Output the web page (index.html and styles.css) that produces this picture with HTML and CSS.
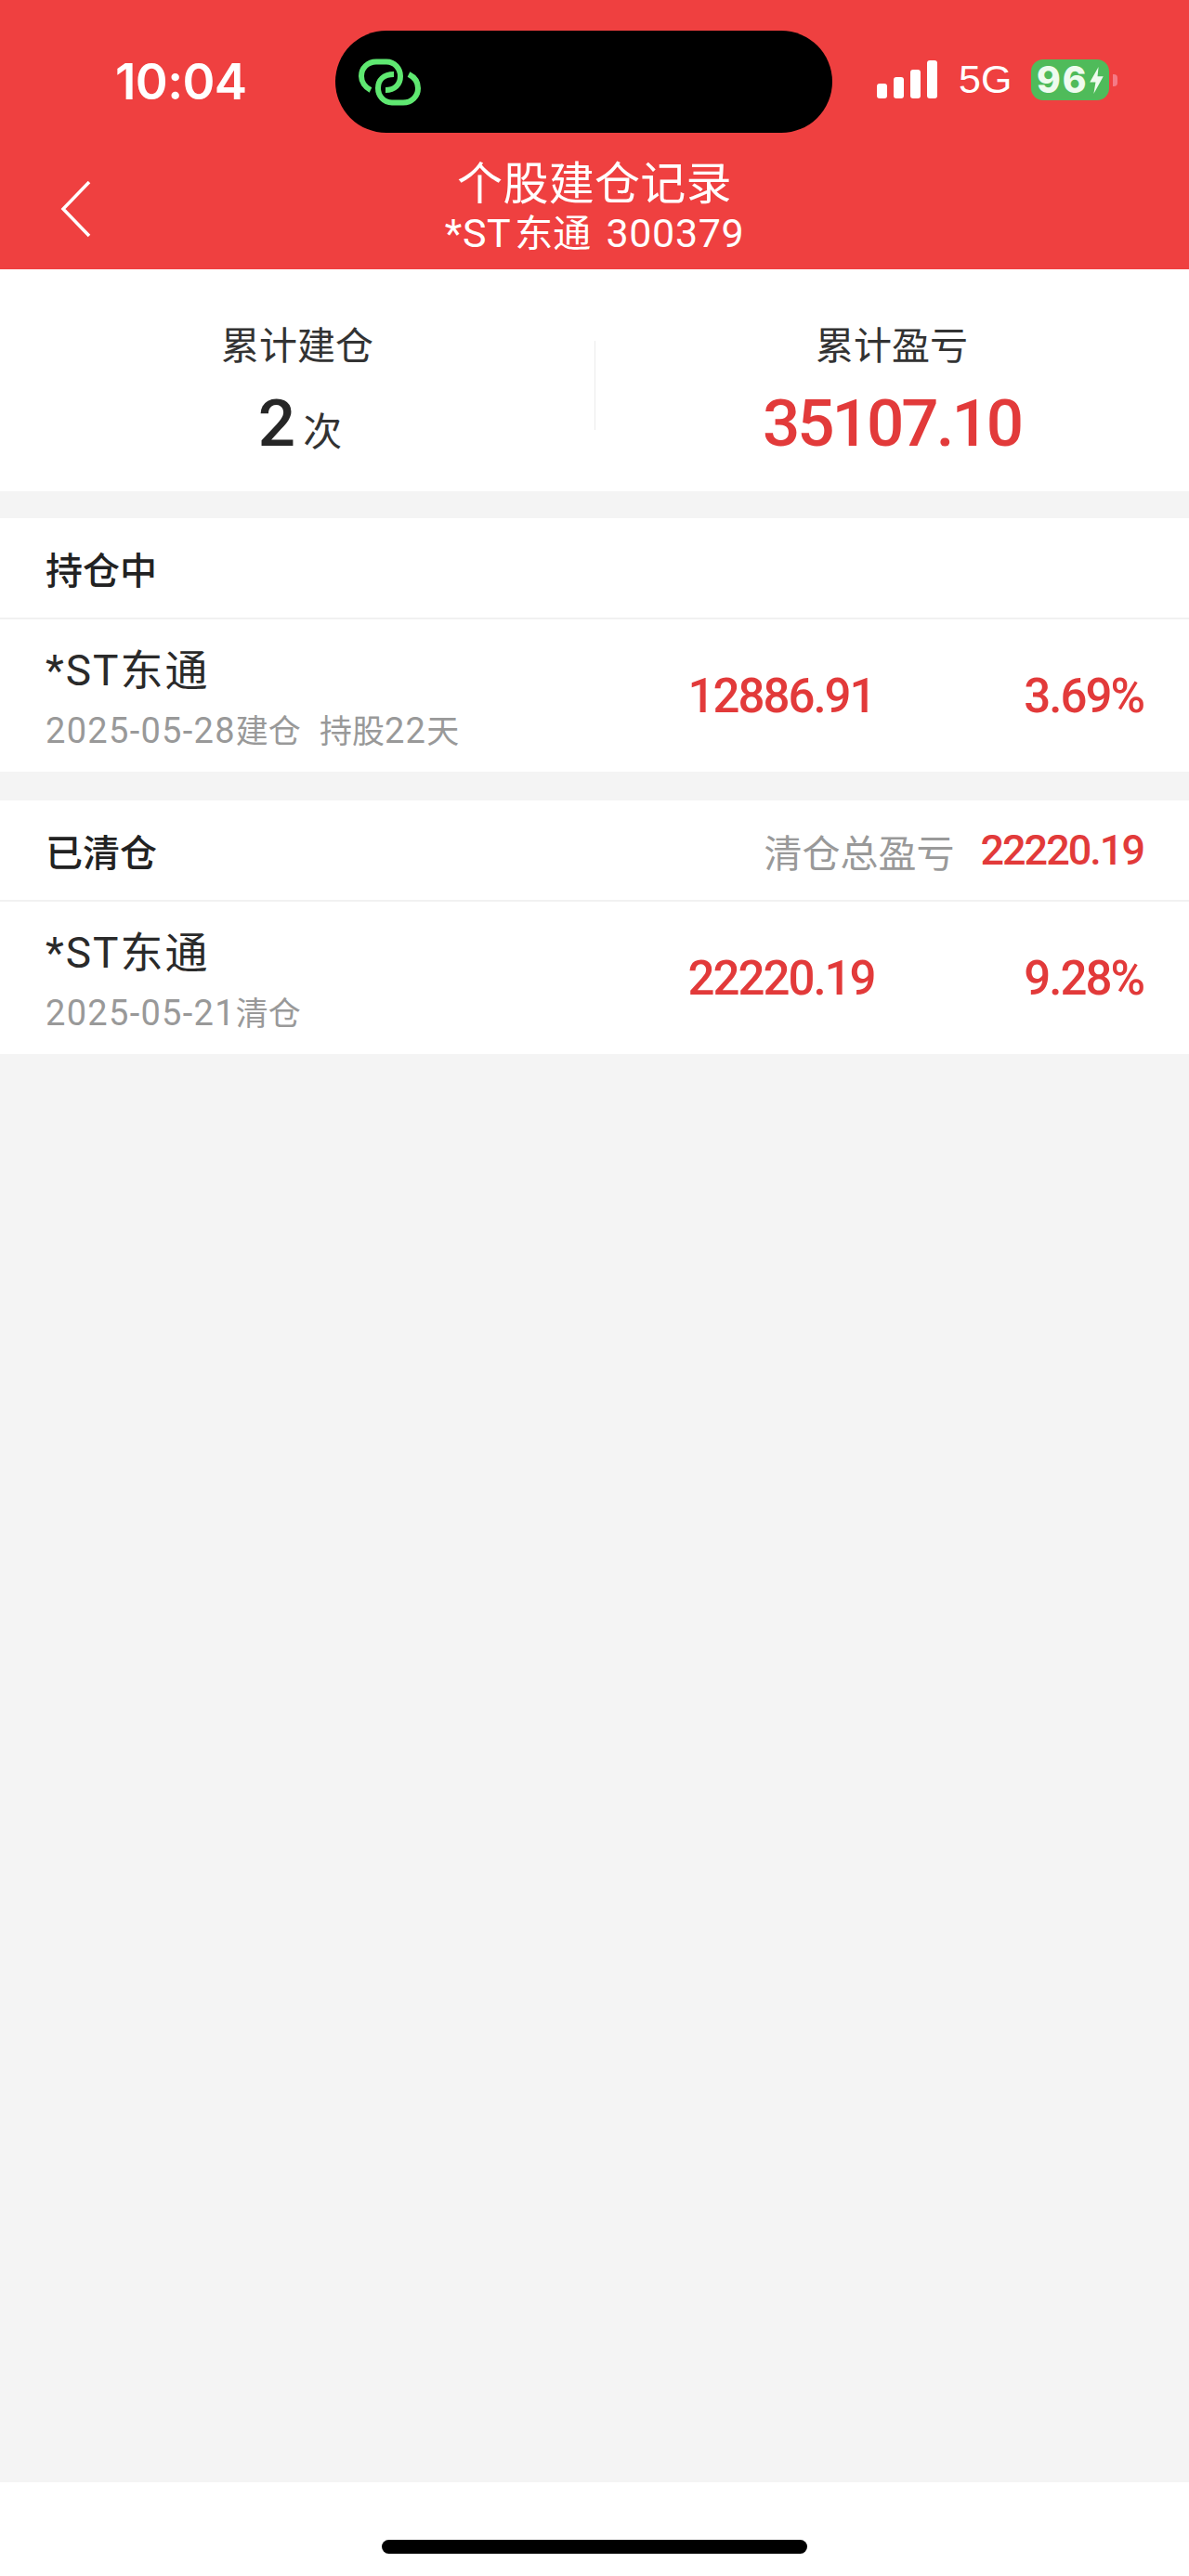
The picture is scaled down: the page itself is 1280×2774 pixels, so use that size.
FILE: index.html
```html
<!DOCTYPE html>
<html lang="zh-CN">
<head>
<meta charset="utf-8">
<title>个股建仓记录</title>
<link rel="stylesheet" href="styles.css">
</head>
<body>
<div class="app">
  <header class="top">
    <div class="status">
      <span class="time">10:04</span>
      <div class="island">
        <svg class="link" viewBox="0 0 67 51" width="67" height="51" fill="none" stroke="#5fe871" stroke-width="6">
          <path d="M13 34C7 31 3 25 3 19C3 10 10 3.500 19 3.500H30C39 3.500 45 11 45 19C45 28 39 34 29 34"/>
          <path d="M54 17C60 20 64 25 64 32C64 41 57 47.500 48 47.500H36C27 47.500 21 40 21 32C21 23 27 17 38 17"/>
        </svg>
      </div>
      <div class="indicators">
        <div class="signal"><i class="b1"></i><i class="b2"></i><i class="b3"></i><i class="b4"></i></div>
        <span class="net">5G</span>
        <div class="battery">
          <div class="cell"><span>96</span>
            <svg viewBox="0 0 14 28" width="17" height="29"><path d="M9 0L0 16H6L4 28L14 10H8Z" fill="#eefbef"/></svg>
          </div>
          <i class="nub"></i>
        </div>
      </div>
    </div>
    <div class="nav">
      <svg class="back" viewBox="0 0 35 62" width="35" height="62" fill="none" stroke="#fff" stroke-width="3.500"><path d="M32 1L4 30L32 59"/></svg>
      <div class="title">
        <div class="t1">个股建仓记录</div>
        <div class="t2">*ST<span class="cn">东通</span> 300379</div>
      </div>
    </div>
  </header>

  <section class="summary">
    <div class="stat">
      <div class="label">累计建仓</div>
      <div class="val dark"><b>2</b><span>次</span></div>
    </div>
    <div class="stat">
      <div class="label">累计盈亏</div>
      <div class="val red"><b>35107.10</b></div>
    </div>
  </section>

  <section class="group">
    <div class="ghead"><strong>持仓中</strong></div>
    <div class="row">
      <div class="who">
        <div class="name">*ST东通</div>
        <div class="meta">2025-05-28<span class="cn">建仓</span><span class="cn gap">持股</span>22<span class="cn">天</span></div>
      </div>
      <div class="amt">12886.91</div>
      <div class="pct">3.69%</div>
    </div>
  </section>

  <section class="group">
    <div class="ghead">
      <strong>已清仓</strong>
      <span class="tlabel">清仓总盈亏</span>
      <span class="tval">22220.19</span>
    </div>
    <div class="row">
      <div class="who">
        <div class="name">*ST东通</div>
        <div class="meta">2025-05-21<span class="cn">清仓</span></div>
      </div>
      <div class="amt">22220.19</div>
      <div class="pct">9.28%</div>
    </div>
  </section>

  <div class="fill"></div>
  <footer class="home"><i></i></footer>
</div>
</body>
</html>
```
FILE: styles.css
```css
* { box-sizing: border-box; }
html, body { margin: 0; padding: 0; }
body {
  width: 1280px;
  height: 2774px;
  background: #f4f4f4;
  font-family: "Roboto", "Noto Sans CJK SC", sans-serif;
  color: #2a2a2a;
}
.app { display: flex; flex-direction: column; height: 2774px; }

.top { height: 290px; background: #ef4040; color: #fff; flex: none; }
.status { display: flex; align-items: flex-start; height: 143px; padding-top: 33px; }
.time {
  width: 237px; margin-left: 124px; margin-top: 24px; flex: none;
  font-family: "Inter", sans-serif; font-size: 53px; line-height: 62px; font-weight: 600;
  letter-spacing: -.6px; white-space: nowrap;
}
.island {
  width: 535px; height: 110px; background: #000; border-radius: 55px; flex: none;
  padding: 30px 0 0 25px;
}
.link { display: block; }
.indicators { display: flex; align-items: flex-start; margin-left: 48px; }
.signal { display: flex; align-items: flex-end; gap: 7px; height: 41px; margin-top: 32px; }
.signal i { display: block; width: 11px; background: #fff; border-radius: 3px; }
.signal .b1 { height: 16px; }
.signal .b2 { height: 23px; }
.signal .b3 { height: 31px; }
.signal .b4 { height: 41px; }
.net {
  margin-left: 23px; margin-top: 28px; width: 55px; flex: none;
  font-family: "Liberation Sans", sans-serif; font-size: 43px; line-height: 49px;
}
.battery { display: flex; align-items: center; margin-left: 23px; margin-top: 31px; }
.cell {
  display: flex; align-items: center; width: 84px; height: 44px; padding-left: 6px;
  background: #4fbb5a; border-radius: 13px; color: #eefbef; flex: none;
}
.cell span { font-family: "Inter", sans-serif; font-weight: 800; font-size: 39px; line-height: 44px; letter-spacing: 2px; }
.cell svg { display: block; flex: none; }
.nub { display: block; width: 5px; height: 13px; margin-left: 4px; background: #f57a86; border-radius: 0 4px 4px 0; }

.nav { display: flex; align-items: flex-start; height: 147px; padding: 52px 0 0 64px; }
.back { display: block; flex: none; }
.title { width: 1152px; margin-left: -35px; margin-top: -25px; text-align: center; }
.t1 { font-size: 49px; line-height: 58px; letter-spacing: .3px; }
.t2 { font-size: 43px; line-height: 46px; letter-spacing: .6px; }
.t2 .cn { font-size: 41px; letter-spacing: 0; margin: 0 5px 0 4px; }

.summary { display: flex; height: 239px; background: #fff; flex: none; }
.stat { width: 640px; display: flex; flex-direction: column; align-items: center; padding-top: 59px; }
.stat + .stat { position: relative; }
.stat + .stat::before {
  content: ""; position: absolute; left: 0; top: 77px; width: 1px; height: 96px; background: #ececec;
}
.label { font-size: 41px; line-height: 48px; color: #333; }
.val { margin-top: 18px; height: 82px; line-height: 82px; display: flex; align-items: baseline; white-space: nowrap; }
.val b { font-size: 71px; font-weight: 500; letter-spacing: -3px; }
.val span { font-size: 42px; margin-left: 11px; color: #333; }
.dark { color: #262626; padding-left: 6px; }
.red { color: #e23a3a; }

.group { margin-top: 31px; background: #fff; flex: none; }
.summary + .group { margin-top: 29px; }
.ghead {
  display: flex; align-items: center; height: 109px; padding: 0 49px;
  border-bottom: 2px solid #f1f1f1;
}
.ghead strong { font-size: 40px; font-weight: 500; color: #222; flex: 1; }
.tlabel { font-size: 41px; color: #999; }
.tval { font-size: 45px; font-weight: 500; letter-spacing: -2px; color: #e23a3a; margin-left: 28px; }
.row { display: flex; align-items: center; height: 164px; padding: 0 49px; }
.who { width: 676px; flex: none; padding-top: 5px; }
.name { font-size: 46px; line-height: 56px; color: #2a2a2a; letter-spacing: 2px; }
.meta { font-size: 38px; line-height: 40px; margin-top: 17px; color: #999; white-space: nowrap; letter-spacing: 1.3px; }
.meta .cn { font-size: 35px; letter-spacing: 0; }
.meta .gap { margin-left: 20px; }
.amt, .pct { font-size: 51px; font-weight: 500; letter-spacing: -2px; color: #e23a3a; }
.amt { width: 232px; flex: none; text-align: center; }
.pct { flex: 1; text-align: right; }

.fill { flex: 1; }
.home { height: 101px; background: #fff; flex: none; padding: 62px 0 0 411px; }
.home i { display: block; width: 458px; height: 15px; border-radius: 8px; background: #000; }
```
